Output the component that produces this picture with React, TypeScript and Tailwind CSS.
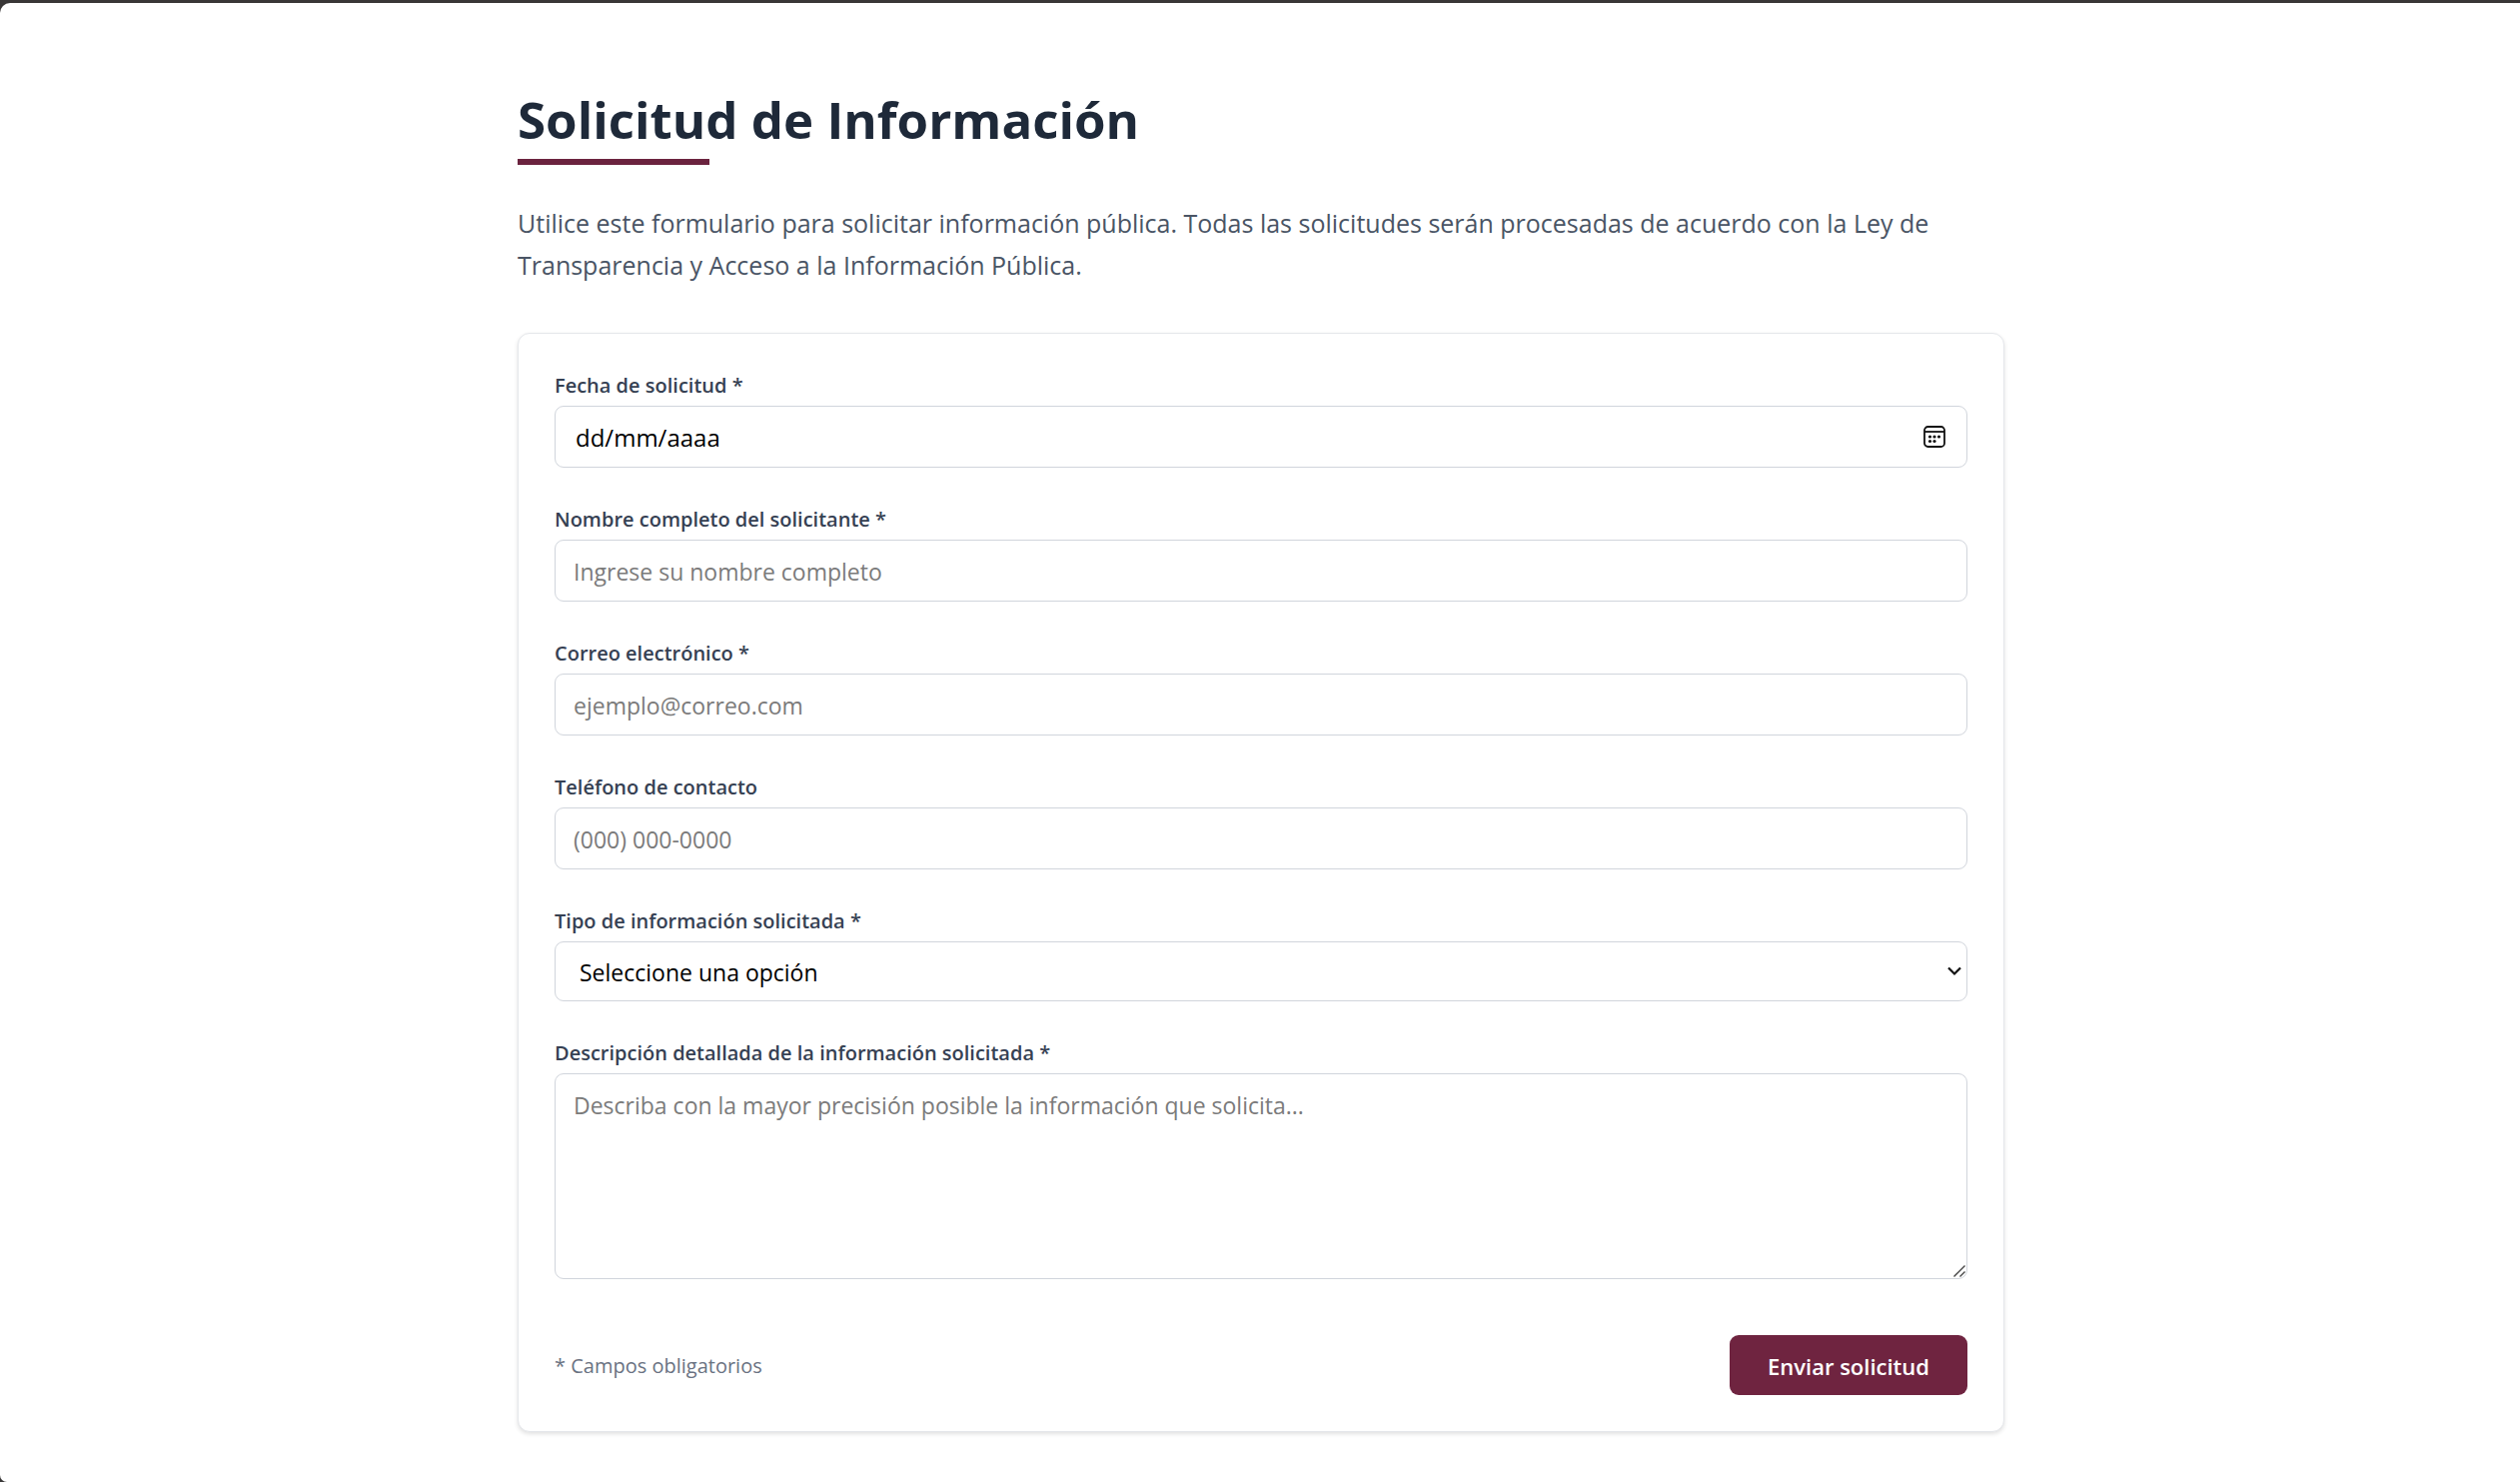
import React from 'react';

const fieldClass =
  'block w-full rounded-[9px] border border-gray-300 bg-white px-[18px] pt-[13px] pb-[11px] text-[23px] leading-9 text-black placeholder:text-[#7b7b7b]';

function Field({ id, label, children }: { id: string; label: string; children: React.ReactNode }) {
  return (
    <div>
      <label htmlFor={id} className="mb-1.5 block pt-0.5 text-[20px] leading-7 font-semibold text-gray-700">
        {label}
      </label>
      <div className="relative">{children}</div>
    </div>
  );
}

function CalendarIcon() {
  return (
    <svg viewBox="0 0 22 22" className="size-[22px]" fill="none" stroke="#111" strokeWidth="1.8" aria-hidden="true">
      <rect x="1" y="1" width="20" height="20" rx="3.5" />
      <path d="M1 6h20" />
      <g fill="#111" stroke="none">
        <circle cx="6.5" cy="11" r="1.6" />
        <circle cx="11" cy="11" r="1.6" />
        <circle cx="15.5" cy="11" r="1.6" />
        <circle cx="6.5" cy="15.5" r="1.6" />
        <circle cx="11" cy="15.5" r="1.6" />
      </g>
    </svg>
  );
}

export default function App() {
  return (
    <div className="flex min-h-screen flex-col bg-[#393737] pt-[3px] font-['Open_Sans',sans-serif]">
      <main className="grow rounded-tl-[10px] rounded-bl-[7px] bg-white pl-0.5">
        <div className="mx-auto max-w-[1536px] px-6 pt-[86px] pb-12">
          <h1 className="text-[51px] leading-[60px] font-bold text-gray-800">Solicitud de Información</h1>
          <div className="mt-2.5 h-1.5 w-48 bg-[#6b233f]" />
          <p className="mt-[37px] text-[25px] leading-[42px] text-gray-600">
            Utilice este formulario para solicitar información pública. Todas las solicitudes serán procesadas de
            acuerdo con la Ley de Transparencia y Acceso a la Información Pública.
          </p>

          <form
            className="mt-[47px] flex flex-col gap-9 rounded-xl border border-gray-200 bg-white p-9 shadow-[0_2px_4px_rgba(0,0,0,0.12)]"
            onSubmit={(e) => e.preventDefault()}
          >
            <Field id="fecha" label="Fecha de solicitud *">
              <input
                id="fecha"
                type="text"
                inputMode="numeric"
                placeholder="dd/mm/aaaa"
                className="block w-full rounded-[9px] border border-gray-300 bg-white px-5 pt-[13px] pb-[11px] text-[24px] leading-9 text-black placeholder:text-black"
              />
              <button
                type="button"
                aria-label="Abrir calendario"
                className="absolute inset-y-0 right-[22px] flex items-center"
              >
                <CalendarIcon />
              </button>
            </Field>
            <Field id="nombre" label="Nombre completo del solicitante *">
              <input id="nombre" type="text" placeholder="Ingrese su nombre completo" className={fieldClass} />
            </Field>
            <Field id="correo" label="Correo electrónico *">
              <input id="correo" type="email" placeholder="ejemplo@correo.com" className={fieldClass} />
            </Field>
            <Field id="telefono" label="Teléfono de contacto">
              <input id="telefono" type="tel" placeholder="(000) 000-0000" className={fieldClass} />
            </Field>
            <Field id="tipo" label="Tipo de información solicitada *">
              <select
                id="tipo"
                defaultValue=""
                className="block h-[60px] w-full appearance-none rounded-[9px] border border-gray-300 bg-white px-6 pt-0.5 text-[23px] leading-9 text-black"
              >
                <option value="">Seleccione una opción</option>
                <option value="financiera">Información financiera</option>
                <option value="administrativa">Información administrativa</option>
                <option value="otra">Otra</option>
              </select>
              <span className="pointer-events-none absolute inset-y-0 right-1.5 flex items-center">
                <svg viewBox="0 0 14 10" className="h-2.5 w-3.5" fill="none" stroke="#111" strokeWidth="2.2" aria-hidden="true">
                  <path d="M1 1.5l6 6 6-6" />
                </svg>
              </span>
            </Field>
            <Field id="descripcion" label="Descripción detallada de la información solicitada *">
              <textarea
                id="descripcion"
                placeholder="Describa con la mayor precisión posible la información que solicita..."
                className="block h-[206px] w-full resize-none rounded-[9px] border border-gray-300 bg-white px-[18px] pt-[13px] pb-[11px] text-[23px] leading-9 text-black placeholder:text-[#7b7b7b]"
              />
              <svg
                viewBox="0 0 12 12"
                className="pointer-events-none absolute right-0.5 bottom-0.5 size-3"
                fill="none"
                stroke="#444"
                strokeWidth="1.4"
                aria-hidden="true"
              >
                <path d="M.5 11.5l11-11M6.5 11.5l5-5" />
              </svg>
            </Field>
            <div className="flex items-center justify-between pt-5">
              <p className="pt-0.5 text-[20px] leading-7 text-gray-500">* Campos obligatorios</p>
              <button
                type="submit"
                className="rounded-[9px] bg-[#6f2440] px-[38px] pt-[13px] pb-[11px] text-[22px] leading-9 font-semibold text-white"
              >
                Enviar solicitud
              </button>
            </div>
          </form>
        </div>
      </main>
    </div>
  );
}
